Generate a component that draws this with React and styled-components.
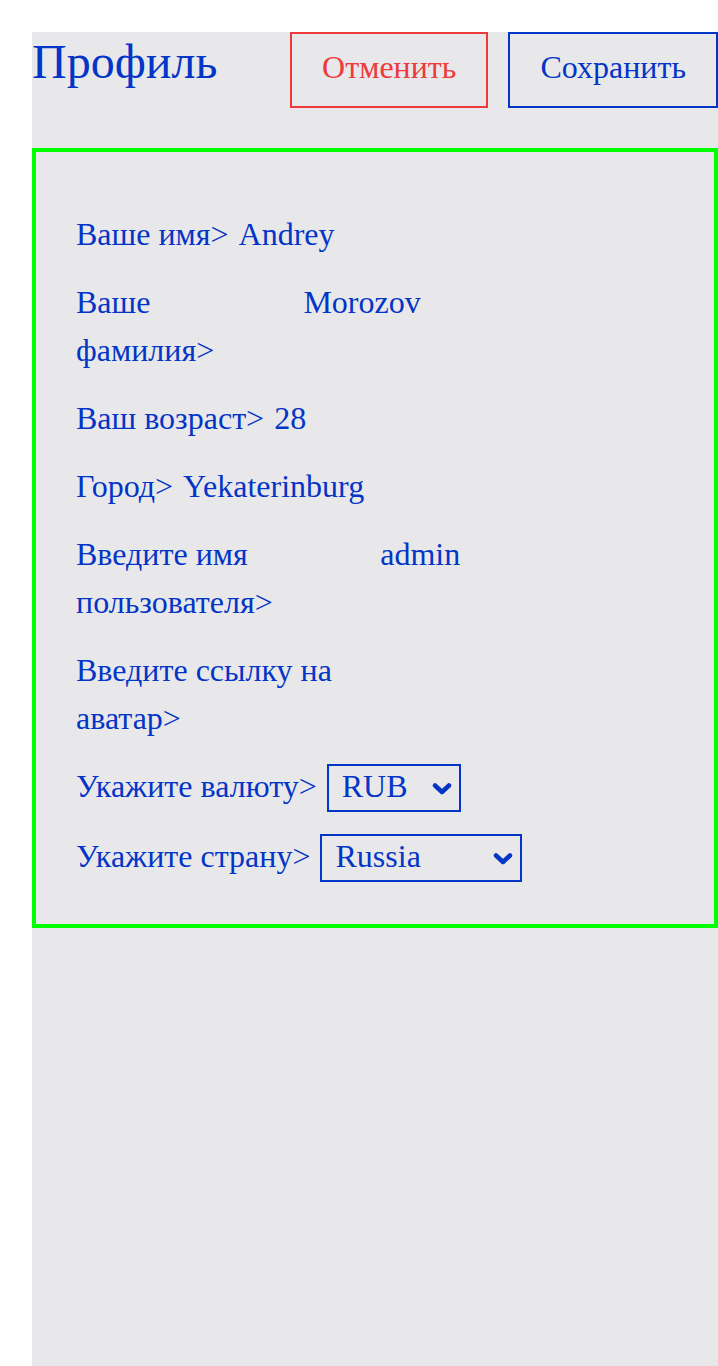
import React from 'react';
import styled, { createGlobalStyle } from 'styled-components';

const BLUE = '#0335c7';

const GlobalStyle = createGlobalStyle`
  html, body {
    margin: 0;
    padding: 0;
    background: #ffffff;
  }
  body {
    padding: 32px 0 0 32px;
    font-family: "Liberation Serif", "Times New Roman", serif;
  }
`;

const Page = styled.div`
  width: 686px;
  min-height: calc(100vh - 32px);
  background: #e8e8eb;
  color: ${BLUE};
`;

const Header = styled.header`
  display: flex;
  justify-content: space-between;
  align-items: flex-start;
  margin-bottom: 40px;
`;

const Title = styled.h1`
  margin: 0;
  font-size: 48px;
  font-weight: 400;
  line-height: 60px;
`;

const Actions = styled.div`
  display: flex;
  gap: 20px;
`;

const Button = styled.button`
  font-family: inherit;
  font-size: 32px;
  line-height: 36px;
  padding: 15px 30px 21px;
  background: transparent;
  border: 2px solid ${(p) => (p.$danger ? '#ee3a3a' : BLUE)};
  color: ${(p) => (p.$danger ? '#ee3a3a' : BLUE)};
  cursor: pointer;
`;

const Card = styled.form`
  border: 4px solid #00ff00;
  padding: 58px 40px 42px;
  display: flex;
  flex-direction: column;
  gap: 20px;
`;

const Row = styled.div`
  display: flex;
  align-items: baseline;
  gap: 10px;
  font-size: 32px;
  line-height: 48px;
`;

const Label = styled.label`
  flex: 0 1 auto;
`;

const Input = styled.input`
  flex: 0 1 376px;
  width: 376px;
  min-width: 0;
  border: none;
  padding: 0;
  background: transparent;
  color: ${BLUE};
  font-family: inherit;
  font-size: 32px;
  line-height: 48px;
  outline: none;
`;

const SelectBox = styled.div`
  flex: 0 0 auto;
  display: inline-grid;
  align-items: center;
  width: ${(p) => p.$width}px;
  height: 48px;
  box-sizing: border-box;
  border: 2px solid ${BLUE};

  & > * {
    grid-area: 1 / 1;
  }
`;

const Select = styled.select`
  appearance: none;
  -webkit-appearance: none;
  width: 100%;
  height: 44px;
  margin: 0;
  padding: 0 34px 4px 13px;
  border: none;
  border-radius: 0;
  background: transparent;
  color: ${BLUE};
  font-family: inherit;
  font-size: 32px;
  outline: none;
`;

const Chevron = styled.svg`
  justify-self: end;
  margin-right: 7px;
  pointer-events: none;
`;

const ChevronIcon = () => (
  <Chevron width="20" height="13" viewBox="0 0 20 13" aria-hidden="true">
    <polyline
      points="3,3.5 10,10 17,3.5"
      fill="none"
      stroke={BLUE}
      strokeWidth="4.5"
      strokeLinecap="round"
      strokeLinejoin="round"
    />
  </Chevron>
);

const fields = [
  { id: 'name', label: 'Ваше имя>', value: 'Andrey' },
  { id: 'surname', label: 'Ваше фамилия>', value: 'Morozov' },
  { id: 'age', label: 'Ваш возраст>', value: '28' },
  { id: 'city', label: 'Город>', value: 'Yekaterinburg' },
  { id: 'username', label: 'Введите имя пользователя>', value: 'admin' },
  { id: 'avatar', label: 'Введите ссылку на аватар>', value: '' },
];

const selects = [
  { id: 'currency', label: 'Укажите валюту>', width: 134, value: 'RUB', options: ['RUB', 'USD', 'EUR'] },
  { id: 'country', label: 'Укажите страну>', width: 202, value: 'Russia', options: ['Russia', 'Belarus', 'Kazakhstan'] },
];

const App = () => (
  <Page>
    <GlobalStyle />
    <Header>
      <Title>Профиль</Title>
      <Actions>
        <Button type="button" $danger>Отменить</Button>
        <Button type="button">Сохранить</Button>
      </Actions>
    </Header>
    <Card onSubmit={(e) => e.preventDefault()}>
      {fields.map((f) => (
        <Row key={f.id}>
          <Label htmlFor={f.id}>{f.label}</Label>
          <Input id={f.id} defaultValue={f.value} />
        </Row>
      ))}
      {selects.map((s) => (
        <Row key={s.id}>
          <Label htmlFor={s.id}>{s.label}</Label>
          <SelectBox $width={s.width}>
            <Select id={s.id} defaultValue={s.value}>
              {s.options.map((o) => (
                <option key={o}>{o}</option>
              ))}
            </Select>
            <ChevronIcon />
          </SelectBox>
        </Row>
      ))}
    </Card>
  </Page>
);

export default App;
